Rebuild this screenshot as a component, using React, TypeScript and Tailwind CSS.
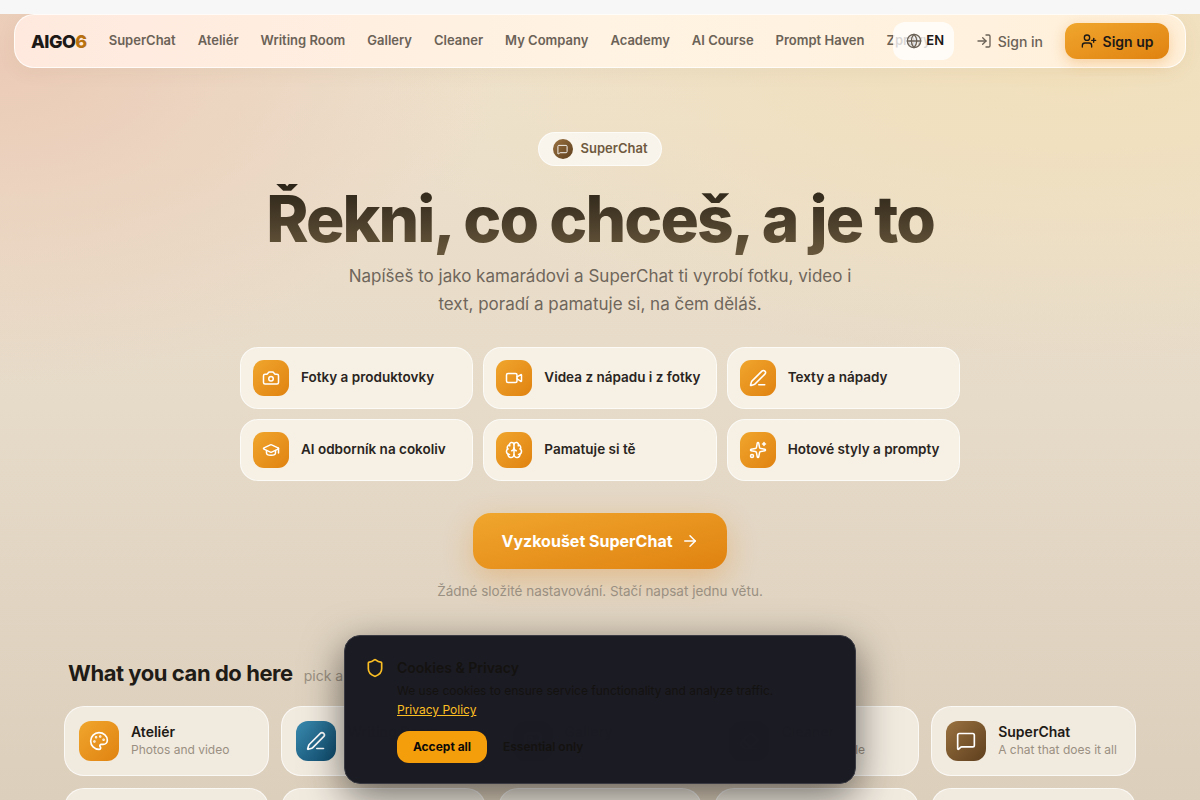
import React from 'react';
import {
  ArrowRight,
  Brain,
  Camera,
  Eraser,
  Globe,
  GraduationCap,
  Image,
  LogIn,
  MessageSquare,
  Palette,
  PenLine,
  Shield,
  Sparkles,
  UserPlus,
  Video,
} from 'lucide-react';

const navItems = ['SuperChat', 'Ateliér', 'Writing Room', 'Gallery', 'Cleaner', 'My Company', 'Academy', 'AI Course', 'Prompt Haven', 'Zprávy'];

const features = [
  { icon: Camera, label: 'Fotky a produktovky' },
  { icon: Video, label: 'Videa z nápadu i z fotky' },
  { icon: PenLine, label: 'Texty a nápady' },
  { icon: GraduationCap, label: 'AI odborník na cokoliv' },
  { icon: Brain, label: 'Pamatuje si tě' },
  { icon: Sparkles, label: 'Hotové styly a prompty' },
];

const tools = [
  { icon: Palette, name: 'Ateliér', desc: 'Photos and video', tone: 'from-[#f0a62c] to-[#e0820f]' },
  { icon: PenLine, name: 'Writing Room', desc: 'Texts and ideas', tone: 'from-[#3a8bb0] to-[#0f4c6e]' },
  { icon: Image, name: 'Gallery', desc: 'Your creations', tone: 'from-[#2f6f9e] to-[#123a5c]' },
  { icon: Eraser, name: 'Cleaner', desc: 'Logo and style', tone: 'from-[#6d5a9e] to-[#3d2f6e]' },
  { icon: MessageSquare, name: 'SuperChat', desc: 'A chat that does it all', tone: 'from-[#9a7240] to-[#5e3f1e]' },
  { icon: Sparkles, name: 'My Company', desc: 'Your business', tone: 'from-[#f0a62c] to-[#e0820f]' },
  { icon: GraduationCap, name: 'Academy', desc: 'Learn with AI', tone: 'from-[#3a8bb0] to-[#0f4c6e]' },
  { icon: Brain, name: 'AI Course', desc: 'Step by step', tone: 'from-[#2f6f9e] to-[#123a5c]' },
  { icon: Camera, name: 'Prompt Haven', desc: 'Ready prompts', tone: 'from-[#6d5a9e] to-[#3d2f6e]' },
  { icon: Video, name: 'Video', desc: 'From an idea', tone: 'from-[#9a7240] to-[#5e3f1e]' },
];

function Header() {
  return (
    <header className="relative z-20 mx-[14px] flex h-[54px] shrink-0 items-center rounded-[20px] border border-white/80 bg-gradient-to-r from-[#ffe9de] via-[#fff3e3] to-[#fff0da] pl-4 pr-4 shadow-[0_4px_20px_rgba(120,80,30,0.06)]">
      <div className="mr-[22px] text-[18px] font-extrabold tracking-[-0.03em] text-[#1c1917]">
        AIGO<span className="text-[#b8710f]">6</span>
      </div>
      <nav className="flex min-w-0 flex-1 items-center gap-[22px] whitespace-nowrap text-[13px] font-semibold text-[#6b6257]">
        {navItems.map((item) => (
          <span key={item}>{item}</span>
        ))}
      </nav>
      <div className="relative z-10 flex items-center">
        <button className="flex h-[38px] w-[61px] items-center justify-center gap-1 rounded-xl bg-white/75 pl-[4px] text-[13px] font-semibold text-[#1c1917]">
          <Globe size={16} className="text-[#6b6257]" />
          EN
        </button>
        <button className="ml-[22px] flex items-center gap-[6px] text-[14px] font-medium text-[#6b6257]">
          <LogIn size={16} />
          Sign in
        </button>
        <button className="ml-[22px] flex h-[36px] w-[104px] items-center justify-center gap-[6px] rounded-xl bg-gradient-to-br from-[#f0a62c] to-[#e0820f] text-[14px] font-semibold text-[#1c1917] shadow-[0_4px_14px_rgba(224,130,15,0.3)]">
          <UserPlus size={16} />
          Sign up
        </button>
      </div>
    </header>
  );
}

function Hero() {
  return (
    <section className="flex flex-col items-center pt-16">
      <div className="flex h-[34px] items-center gap-2 rounded-full border border-white/70 bg-white/65 pl-[14px] pr-[14px] text-[13px] font-semibold text-[#6f5a40]">
        <span className="flex h-5 w-5 items-center justify-center rounded-full bg-gradient-to-br from-[#9a7240] to-[#5e3f1e] text-white">
          <MessageSquare size={11} />
        </span>
        SuperChat
      </div>
      <h1 className="mt-[18px] bg-gradient-to-b from-[#2c2418] to-[#6b5a3e] bg-clip-text pb-1 text-[64px] leading-[1.1] font-extrabold tracking-[-0.03em] text-transparent">
        Řekni, co chceš, a je to
      </h1>
      <p className="mt-[4px] w-[520px] text-center text-[17px] leading-[28px] text-[#6f665b]">
        Napíšeš to jako kamarádovi a SuperChat ti vyrobí fotku, video i text, poradí a pamatuje si, na čem děláš.
      </p>
      <div className="mt-[29px] grid w-[720px] grid-cols-3 gap-[10px]">
        {features.map(({ icon: Icon, label }) => (
          <div key={label} className="flex h-[62px] items-center gap-3 rounded-[18px] border border-white/70 bg-[#f6f0e5] pl-3 pr-2">
            <span className="flex h-9 w-9 shrink-0 items-center justify-center rounded-[11px] bg-gradient-to-br from-[#f0a62c] to-[#e0820f] text-white">
              <Icon size={18} />
            </span>
            <span className="-mt-[2px] text-[13.5px] font-semibold whitespace-nowrap text-[#292420]">{label}</span>
          </div>
        ))}
      </div>
      <button className="mt-8 flex h-14 w-[254px] items-center justify-center gap-[8px] rounded-[18px] bg-gradient-to-br from-[#f0a62c] to-[#e0820f] text-[16px] font-bold text-white shadow-[0_10px_30px_rgba(224,130,15,0.3)]">
        Vyzkoušet SuperChat
        <ArrowRight size={18} />
      </button>
      <p className="mt-[12px] text-[13.5px] text-[#9a9082]">Žádné složité nastavování. Stačí napsat jednu větu.</p>
    </section>
  );
}

function Tools() {
  return (
    <section className="mt-[55px] px-16">
      <div className="flex items-baseline gap-[11px] pl-1">
        <h2 className="text-[22px] font-bold tracking-[-0.02em] text-[#1f1b16]">What you can do here</h2>
        <span className="text-[14px] text-[#9a9082]">pick a tool and start</span>
      </div>
      <div className="mt-[16px] grid grid-cols-5 gap-3">
        {tools.map(({ icon: Icon, name, desc, tone }) => (
          <div key={name} className="flex h-[70px] items-center gap-3 rounded-[20px] border border-white/70 bg-[#f1eadf] pl-[14px]">
            <span className={`flex h-10 w-10 shrink-0 items-center justify-center rounded-xl bg-gradient-to-br text-white ${tone}`}>
              <Icon size={20} />
            </span>
            <div className="mt-[1px] min-w-0">
              <div className="text-[14px] leading-[18px] font-semibold text-[#1f1b16]">{name}</div>
              <div className="text-[12px] leading-[18px] whitespace-nowrap text-[#9a9082]">{desc}</div>
            </div>
          </div>
        ))}
      </div>
    </section>
  );
}

function CookieModal() {
  return (
    <div className="absolute top-[635px] left-[344px] z-30 flex h-[149px] w-[512px] gap-[12px] rounded-2xl border border-[#3a3a42] bg-[#1a1a22]/[0.995] pt-[21px] pl-[20px] shadow-[0_12px_40px_rgba(0,0,0,0.55)]">
      <Shield size={20} className="mt-[1px] shrink-0 text-[#fbbf24]" />
      <div>
        <div className="text-[14px] leading-[22px] font-semibold text-[#141210]">Cookies &amp; Privacy</div>
        <p className="mt-[4px] text-[12px] leading-[16px] text-[#141210]">We use cookies to ensure service functionality and analyze traffic.</p>
        <a className="mt-[2px] block text-[12px] leading-[18px] text-[#fbbf24] underline">Privacy Policy</a>
        <div className="mt-[12px] flex items-center gap-2">
          <button className="h-8 w-[90px] rounded-xl bg-[#f59e0b] text-[12px] font-bold text-[#0c0a09]">Accept all</button>
          <button className="h-8 px-2 text-[12px] font-semibold text-[#141210]">Essential only</button>
        </div>
      </div>
    </div>
  );
}

export default function App() {
  return (
    <div className="relative h-[800px] w-[1200px] overflow-hidden bg-[#f7f7f7] font-['Inter',sans-serif]">
      <main className="mt-[14px] flex h-[786px] flex-col overflow-hidden bg-[radial-gradient(ellipse_500px_320px_at_0%_6%,#ebcbb7_0%,rgba(235,203,183,0)_100%),radial-gradient(ellipse_720px_300px_at_90%_6%,#f2e0bb_0%,rgba(242,224,187,0)_100%),linear-gradient(180deg,#efe3ce_0%,#e6dac8_50%,#dccfbc_100%)]">
        <Header />
        <Hero />
        <Tools />
      </main>
      <CookieModal />
    </div>
  );
}
